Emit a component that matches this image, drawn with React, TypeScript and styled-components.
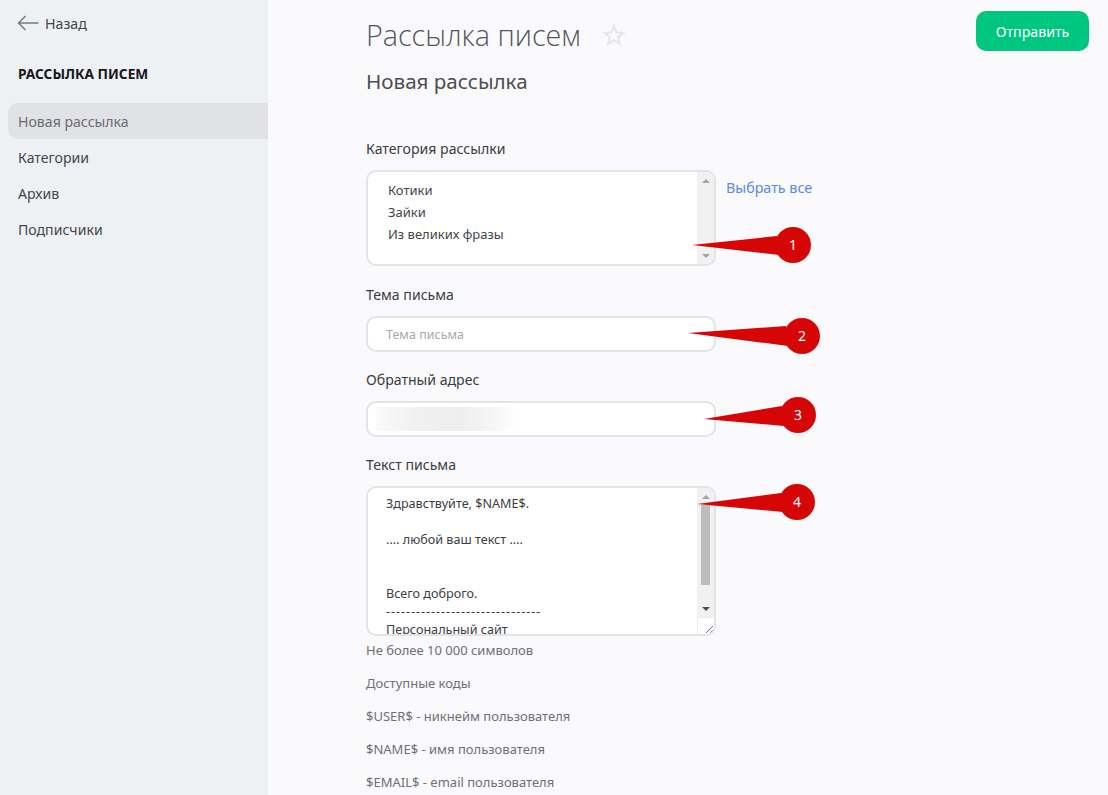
import React from "react";
import styled, { createGlobalStyle } from "styled-components";

const Global = createGlobalStyle`
  html, body { margin: 0; padding: 0; height: 795px; overflow: hidden; background: #fafafd; }
  #root { height: 795px; }
  * { box-sizing: border-box; }
`;

const Page = styled.div`
  display: grid;
  grid-template-columns: 268px 1fr;
  height: 795px;
  overflow: hidden;
  font-family: "Noto Sans", "Open Sans", sans-serif;
  font-size: 14px;
  color: #3f3f46;
`;

const Sidebar = styled.aside`
  background: #eef1f3;
  padding: 13px 0 0 8px;
`;

const Back = styled.a`
  display: flex;
  align-items: center;
  gap: 6px;
  height: 20px;
  padding-left: 9px;
  color: #444;
  font-size: 14.2px;
`;

const SideTitle = styled.h2`
  margin: 31px 0 19px 10px;
  font-size: 13.7px;
  line-height: 20px;
  font-weight: 700;
  color: #17171c;
`;

const NavItem = styled.a<{ $active?: boolean }>`
  display: flex;
  align-items: center;
  height: 36px;
  padding-left: 10px;
  font-size: 14.1px;
  color: ${(p) => (p.$active ? "#6b6b73" : "#45454c")};
  background: ${(p) => (p.$active ? "#e1e2e6" : "transparent")};
  border-radius: 10px 0 0 10px;
`;

const Main = styled.main`
  padding: 11px 19px 0 98px;
`;

const Header = styled.header`
  display: flex;
  align-items: flex-start;
  height: 40px;
`;

const Title = styled.h1`
  margin: -1px 0 0;
  font-family: "Open Sans", sans-serif;
  font-weight: 300;
  font-size: 28.7px;
  line-height: 50px;
  color: #55555c;
`;

const Star = styled.svg`
  margin: 13px 0 0 22px;
`;

const SendButton = styled.button`
  margin-left: auto;
  width: 113px;
  height: 40px;
  border: 0;
  border-radius: 10px;
  background: #00c77f;
  color: #fff;
  font-family: "Noto Sans", sans-serif;
  font-size: 14.2px;
`;

const Subtitle = styled.h3`
  margin: 16px 0 0;
  font-weight: 400;
  font-size: 20.6px;
  line-height: 28px;
  color: #4d4d54;
`;

const Form = styled.form`
  width: 350px;
  padding-top: 44px;
`;

const Label = styled.div`
  font-size: 14.1px;
  line-height: 20px;
  color: #3b3b42;
  margin-bottom: 11px;
`;

const Field = styled.div<{ $height: number; $gap: number }>`
  position: relative;
  width: 350px;
  height: ${(p) => p.$height}px;
  margin-bottom: ${(p) => p.$gap}px;
  border: 2px solid #e3e3e8;
  border-radius: 10px;
  background: #fff;
`;

const Clip = styled.div`
  display: flex;
  height: 100%;
  border-radius: 8px;
  overflow: hidden;
`;

const Options = styled.div`
  flex: 1;
  padding: 7px 0 0 20px;
  font-size: 13px;
  line-height: 22px;
  color: #44444a;
`;

const Placeholder = styled.div`
  padding-left: 18px;
  font-size: 12.5px;
  line-height: 34px;
  color: #a9a9ae;
`;

const Blurred = styled.div`
  width: 140px;
  height: 24px;
  margin: 4px 0 0 8px;
  background: linear-gradient(90deg, #fafafa 0%, #f0f0f0 30%, #eeeeee 60%, #f6f6f6 85%, #ffffff 100%);
`;

const MessageText = styled.div`
  flex: 1;
  padding: 7px 0 0 18px;
  font-size: 12.6px;
  line-height: 18px;
  color: #3d3d43;
  white-space: pre;
`;

const Dashes = styled.span`
  letter-spacing: 0.95px;
`;

const Scrollbar = styled.div`
  display: flex;
  flex-direction: column;
  width: 17px;
  background: #f1f1f1;
`;

const ScrollArrow = styled.div<{ $down?: boolean; $dark?: boolean }>`
  height: 17px;
  flex: none;
  display: flex;
  align-items: center;
  justify-content: center;
  &::before {
    content: "";
    border-left: 4px solid transparent;
    border-right: 4px solid transparent;
    ${(p) => (p.$down ? "border-top" : "border-bottom")}: 4px solid ${(p) => (p.$dark ? "#505050" : "#a3a3a3")};
  }
`;

const ScrollTrack = styled.div`
  flex: 1;
  padding: 0 4px;
`;

const ScrollThumb = styled.div`
  height: 80px;
  background: #bdbdbd;
`;

const ResizeCorner = styled.div`
  height: 17px;
  flex: none;
  background: #fff;
  border-left: 1px solid #ececec;
  border-top: 1px solid #ececec;
  display: flex;
`;

const Aside = styled.a`
  position: absolute;
  left: 358px;
  top: 6px;
  font-size: 14.3px;
  line-height: 20px;
  color: #5b88f0;
  white-space: nowrap;
`;

const Callout = styled.svg`
  position: absolute;
  overflow: visible;
  pointer-events: none;
`;

const CalloutNumber = styled.text`
  font-family: "Noto Sans", sans-serif;
  font-size: 14px;
  fill: #fff;
  text-anchor: middle;
`;

const Note = styled.p`
  margin: 0;
  font-size: 13px;
  line-height: 33px;
  color: #6f6f74;
  white-space: nowrap;
`;

const NoteList = styled.div`
  margin-top: -2px;
`;

type MarkProps = { n: number; tip: [number, number]; c: [number, number]; a: [number, number]; b: [number, number]; origin: [number, number] };

function Mark({ n, tip, c, a, b, origin }: MarkProps) {
  return (
    <Callout
      width="130"
      height="40"
      style={{ left: tip[0] - origin[0] - 2, top: tip[1] - origin[1] - 22 }}
      viewBox={`${tip[0]} ${tip[1] - 20} 130 40`}
    >
      <polygon points={`${tip[0]},${tip[1]} ${a[0]},${a[1]} ${b[0]},${b[1]}`} fill="#d60606" />
      <circle cx={c[0]} cy={c[1]} r="18" fill="#d60606" />
      <CalloutNumber x={c[0]} y={c[1] + 5}>{n}</CalloutNumber>
    </Callout>
  );
}

const Scroll = ({ dark, thumb }: { dark?: boolean; thumb?: boolean }) => (
  <Scrollbar>
    <ScrollArrow />
    <ScrollTrack>{thumb && <ScrollThumb />}</ScrollTrack>
    <ScrollArrow $down $dark={dark} />
    {thumb && (
      <ResizeCorner>
        <svg width="16" height="16" viewBox="0 0 16 16">
          <path d="M8 15 L15 8 M12 15 L15 12" stroke="#777" strokeWidth="1" fill="none" />
        </svg>
      </ResizeCorner>
    )}
  </Scrollbar>
);

export default function App() {
  return (
    <Page>
      <Global />
      <Sidebar>
        <Back>
          <svg width="22" height="16" viewBox="0 0 22 16">
            <path d="M21.5 8 H1.5 M8.5 1 L1.5 8 L8.5 15" stroke="#7a7a7a" strokeWidth="1.5" fill="none" />
          </svg>
          Назад
        </Back>
        <SideTitle>РАССЫЛКА ПИСЕМ</SideTitle>
        <NavItem $active>Новая рассылка</NavItem>
        <NavItem>Категории</NavItem>
        <NavItem>Архив</NavItem>
        <NavItem>Подписчики</NavItem>
      </Sidebar>
      <Main>
        <Header>
          <Title>Рассылка писем</Title>
          <Star width="22" height="22" viewBox="0 0 24 24">
            <path d="M12 2.5 L14.9 9 L22 9.7 L16.7 14.4 L18.2 21.4 L12 17.8 L5.8 21.4 L7.3 14.4 L2 9.7 L9.1 9 Z" fill="none" stroke="#e3e6ea" strokeWidth="2.4" />
          </Star>
          <SendButton type="button">Отправить</SendButton>
        </Header>
        <Subtitle>Новая рассылка</Subtitle>
        <Form>
          <Label>Категория рассылки</Label>
          <Field $height={96} $gap={19}>
            <Clip>
              <Options>
                <div>Котики</div>
                <div>Зайки</div>
                <div>Из великих фразы</div>
              </Options>
              <Scroll />
            </Clip>
            <Aside>Выбрать все</Aside>
            <Mark n={1} origin={[366, 170]} tip={[692, 245]} c={[793, 245]} a={[777, 236]} b={[780, 255]} />
          </Field>
          <Label>Тема письма</Label>
          <Field $height={36} $gap={18}>
            <Placeholder>Тема письма</Placeholder>
            <Mark n={2} origin={[366, 316]} tip={[688, 333]} c={[802, 336]} a={[786, 326]} b={[788, 346]} />
          </Field>
          <Label>Обратный адрес</Label>
          <Field $height={36} $gap={18}>
            <Blurred />
            <Mark n={3} origin={[366, 401]} tip={[704, 419]} c={[798, 415]} a={[782, 406]} b={[784, 426]} />
          </Field>
          <Label>Текст письма</Label>
          <Field $height={150} $gap={0}>
            <Clip>
              <MessageText>
                {"Здравствуйте, $NAME$.\n\n.... любой ваш текст ....\n\n\nВсего доброго.\n"}
                <Dashes>-------------------------------</Dashes>
                {"\nПерсональный сайт"}
              </MessageText>
              <Scroll dark thumb />
            </Clip>
            <Mark n={4} origin={[366, 486]} tip={[697, 504]} c={[797, 502]} a={[781, 493]} b={[783, 512]} />
          </Field>
          <NoteList>
            <Note>Не более 10 000 символов</Note>
            <Note>Доступные коды</Note>
            <Note>$USER$ - никнейм пользователя</Note>
            <Note>$NAME$ - имя пользователя</Note>
            <Note>$EMAIL$ - email пользователя</Note>
          </NoteList>
        </Form>
      </Main>
    </Page>
  );
}
